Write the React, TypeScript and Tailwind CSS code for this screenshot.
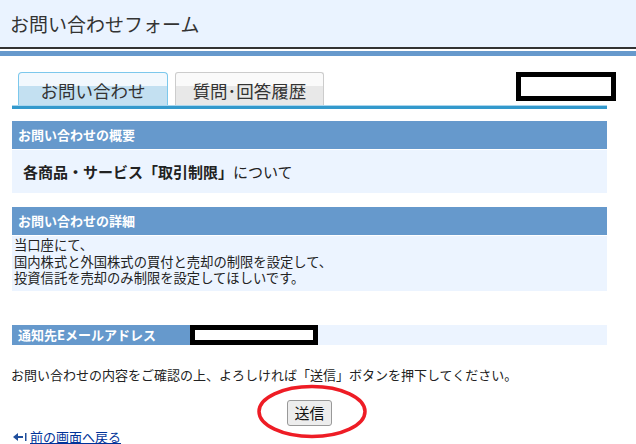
import React from "react";

const jp = { fontFamily: '"Noto Sans CJK JP", "Noto Sans", sans-serif' };

export default function App() {
  return (
    <div className="w-[636px] h-[444px] bg-white overflow-hidden text-[#222]" style={jp}>
      <div className="h-[47px] bg-[#eaf3ff] flex items-center pl-[10px]">
        <span className="text-[19px] leading-[26px] text-[#333]">お問い合わせフォーム</span>
      </div>
      <div className="h-[2px] bg-[#333]" />
      <div className="h-[2px] bg-white" />
      <div className="h-[5px] bg-[#6699cc]" />

      <div className="pl-[12px] w-[607px] mt-[16px]">
        <div className="flex items-end h-[33px] relative">
          <div className="ml-[6px] w-[150px] h-[33px] rounded-t-[4px] border border-b-0 border-[#7cc8ec] bg-[linear-gradient(#f2f8fd_0%,#f2f8fd_40%,#c3e0f1_40%,#c3e0f1_100%)] flex items-center justify-center pt-[3px] text-[17.5px] leading-[22px] text-[#333]">
            お問い合わせ
          </div>
          <div className="ml-[7px] w-[149px] h-[33px] rounded-t-[3px] border border-b-0 border-[#cccccc] bg-[linear-gradient(#fafafa_0%,#fafafa_40%,#e8e8e8_40%,#e8e8e8_100%)] flex items-center justify-center pt-[3px] text-[17.5px] leading-[22px] text-[#333]">
            質問･回答履歴
          </div>
          <div className="absolute left-[504px] top-0 w-[100px] h-[29px] border-[5px] border-black bg-white" />
        </div>
        <div className="h-[1px] bg-[#a9d6ee]" />
        <div className="h-[3px] bg-[#3399cc]" />

        <div className="mt-[12px] h-[28px] bg-[#6699cc] flex items-center pl-[6px] text-[13px] leading-[18px] font-bold text-white">
          お問い合わせの概要
        </div>
        <div className="mt-[1px] h-[43px] bg-[#ecf4ff] flex items-center pl-[11px] text-[15px] leading-[20px]">
          <span className="font-bold">各商品・サービス「取引制限」</span>
          <span>について</span>
        </div>

        <div className="mt-[14px] h-[28px] bg-[#6699cc] flex items-center pl-[6px] text-[13px] leading-[18px] font-bold text-white">
          お問い合わせの詳細
        </div>
        <div className="mt-[1px] h-[55px] bg-[#ecf4ff] pl-[2px] pt-[1px] text-[13.3px] leading-[16.5px]">
          <div>当口座にて、</div>
          <div>国内株式と外国株式の買付と売却の制限を設定して、</div>
          <div>投資信託を売却のみ制限を設定してほしいです。</div>
        </div>

        <div className="mt-[34px] h-[20px] flex">
          <div className="w-[178px] bg-[#6699cc] flex items-center pl-[6px] text-[13px] leading-[18px] font-bold text-white">
            通知先Eメールアドレス
          </div>
          <div className="w-[128px] border-[5px] border-black bg-white" />
          <div className="flex-1 bg-[#ecf4ff]" />
        </div>
      </div>

      <div className="mt-[21px] pl-[11px] text-[13px] leading-[18px] text-[#222]">
        お問い合わせの内容をご確認の上、よろしければ「送信」ボタンを押下してください。
      </div>

      <div className="relative mt-[16px] h-[26px] flex">
        <button className="ml-[287px] w-[45px] h-[26px] border border-[#999] rounded-[3px] bg-[#ededed] text-[15px] leading-[20px] text-[#111]" style={jp}>
          送信
        </button>
        <svg className="absolute left-[256px] top-[-16px]" width="112" height="55" viewBox="0 0 112 55">
          <ellipse cx="56" cy="27.5" rx="53" ry="25" fill="none" stroke="#ee1c25" strokeWidth="3.5" />
        </svg>
      </div>

      <div className="mt-[3px] h-[16px] pl-[13px] flex items-center text-[13px] leading-[16px]">
        <svg width="14" height="10" viewBox="0 0 14 10" className="mr-[3px]">
          <polygon points="0,5 5,1 5,9" fill="#1f4e9c" />
          <rect x="4" y="4" width="6" height="2" fill="#1f4e9c" />
          <rect x="12" y="1" width="1.5" height="8" fill="#1f4e9c" />
        </svg>
        <a className="text-[#003399] underline">前の画面へ戻る</a>
      </div>
    </div>
  );
}
